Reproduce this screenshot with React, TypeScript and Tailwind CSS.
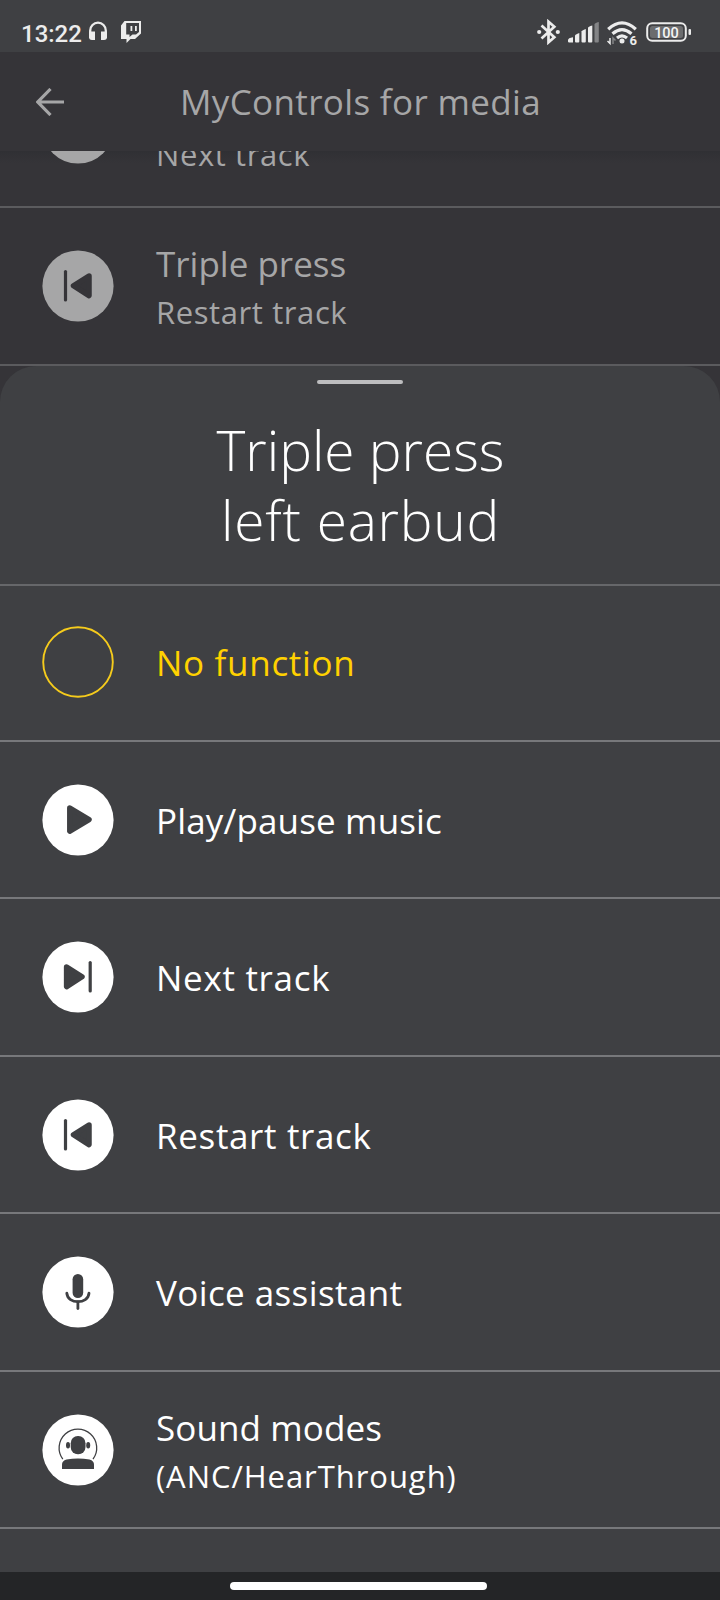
import type { ReactNode } from "react";

const ink = "#3f4043";

function Disc({ children, tone = "#fff", glyph = ink }: { children?: ReactNode; tone?: string; glyph?: string }) {
  return (
    <svg className="size-18 shrink-0" viewBox="0 0 72 72" fill={glyph} stroke={glyph} strokeWidth="0">
      <circle cx="36" cy="36" r="35.6" fill={tone} />
      {children}
    </svg>
  );
}

const PlayGlyph = () => <path d="M27.8 24 L47 35.600 L27.8 47.200 Z" strokeWidth="5.5" strokeLinejoin="round" />;
const NextGlyph = () => (
  <>
    <path d="M24.600 26 L40 35.800 L24.600 45.600 Z" strokeWidth="5.5" strokeLinejoin="round" />
    <path d="M48.2 21.600V50" strokeWidth="3.2" strokeLinecap="round" />
  </>
);
const PrevGlyph = () => (
  <>
    <path d="M47 26 L31.500 35.800 L47 45.600 Z" strokeWidth="5.5" strokeLinejoin="round" />
    <path d="M23.5 21.600V50" strokeWidth="3.2" strokeLinecap="round" />
  </>
);
const MicGlyph = () => (
  <>
    <rect x="30.6" y="18" width="10.6" height="24" rx="5.3" />
    <path d="M24.8 37.2C25.500 48.500 46.300 48.500 47 37.2" fill="none" strokeWidth="2.8" strokeLinecap="round" />
    <path d="M35.9 46V52.500" strokeWidth="2.800" strokeLinecap="round" />
  </>
);
const ModesGlyph = () => (
  <>
    <path d="M20.8 45.2A18.8 18.8 0 1 1 51 45.2" fill="none" strokeWidth="1.3" />
    <rect x="28.7" y="22" width="14.8" height="18.3" rx="7.2" />
    <ellipse cx="26" cy="31.2" rx="2" ry="3.2" />
    <ellipse cx="46.2" cy="31.2" rx="2" ry="3.2" />
    <path d="M20 55V50.5Q20 47 24.5 45.6Q36 43.2 47.500 45.6Q52 47 52 50.500V55Z" />
  </>
);

function Row({ icon, children, note, className }: { icon: ReactNode; children?: ReactNode; note?: ReactNode; className: string }) {
  return (
    <div className={`flex shrink-0 items-end gap-[42px] border-b-2 pl-[42px] ${className}`}>
      {icon}
      <div className="flex h-18 flex-col justify-center gap-[3px] pt-[1px] text-[35px] leading-[48px] whitespace-nowrap">
        <span className="flex h-12 shrink-0">{children}</span>
        {note}
      </div>
    </div>
  );
}

function StatusBar() {
  return (
    <div className="flex h-13 shrink-0 items-start bg-[#3f4043] pt-5 pl-[21px] text-[#ececec]">
      <span className="w-[61px] font-[Roboto] text-[24px] leading-[28px] font-medium whitespace-nowrap">13:22</span>
      <svg className="mt-[1px] ml-[7px] h-5 w-[18px]" viewBox="0 0 18 20" fill="currentColor">
        <path d="M1.200 17V9.500a7.800 7.800 0 0 1 15.600 0V17" fill="none" stroke="currentColor" strokeWidth="2.300" />
        <path d="M0 10.500h6v8.500H3a3 3 0 0 1-3-3zM12 10.500h6V16a3 3 0 0 1-3 3h-3z" />
      </svg>
      <svg className="mt-[1px] ml-[14px] h-[22px] w-5" viewBox="0 0 20 22" fill="currentColor">
        <path fillRule="evenodd" d="M3.500 0H20V12.500L14 18H9.500L5.500 22V18H0V4.500ZM5.200 2V13.500H8.500V16L11.500 13.500H15L18 11V2ZM9.500 5V10H11.300V5ZM14 5V10H15.800V5Z" />
      </svg>
      <svg className="-mt-[1px] ml-auto h-[26px] w-[23px]" viewBox="0 0 23 26" fill="none" stroke="currentColor" strokeWidth="2.7">
        <path d="M4.500 6.500L17.300 18.200L11.500 23.300V2.700L17.300 7.800L4.500 19.500" />
        <circle cx="2.200" cy="13" r="2.100" fill="currentColor" stroke="none" />
        <circle cx="20.800" cy="13" r="2.100" fill="currentColor" stroke="none" />
      </svg>
      <svg className="mt-[2px] ml-2 h-[21px] w-[32px]" viewBox="0 0 32 21" fill="currentColor">
        <path d="M0 18Q0 16 5 15.200V20.500H1.200Q0 20.500 0 19.500Z" />
        <path d="M7 13.500Q7 12.500 11.300 11V19.500Q11.300 20.500 10.300 20.500H8Q7 20.500 7 19.500Z" />
        <path d="M13.500 9.500Q13.500 8.500 17.800 7V19.500Q17.800 20.500 16.800 20.500H14.500Q13.500 20.500 13.500 19.500Z" />
        <path d="M20 6Q20 4.500 24.300 3.500V19.500Q24.300 20.500 23.300 20.500H21Q20 20.500 20 19.500Z" />
        <path d="M26.500 2.500Q26.500 1 30.800 0V19.500Q30.800 20.500 29.800 20.500H27.500Q26.500 20.500 26.500 19.500Z" opacity="0.4" />
      </svg>
      <svg className="mt-[1px] ml-[7px] h-[25px] w-[31px]" viewBox="0 0 31 25" fill="none" stroke="currentColor" strokeWidth="3.200">
        <path d="M1.200 8.200Q15 -4.500 28.800 8.200M5.500 12.700Q15 4.500 24.500 12.700M10 17Q15 12.800 20 17" />
        <circle cx="15" cy="20" r="2.500" fill="currentColor" stroke="none" />
        <path d="M3 17V22.500L0.500 20" strokeWidth="1.500" />
        <path d="M6 23V17L8.500 19.500" strokeWidth="1.500" opacity="0.4" />
        <text x="22.500" y="23.500" className="fill-[#ececec] font-[Roboto] text-[13px] font-bold" stroke="none">6</text>
      </svg>
      <svg className="mt-[2px] mr-7 ml-2 h-5 w-[46px]" viewBox="0 0 46 20">
        <rect x="1.200" y="1.200" width="38.600" height="17.600" rx="5" fill="none" stroke="currentColor" strokeWidth="2" />
        <rect x="4" y="4" width="33" height="12" rx="2.500" fill="#6b6c6e" />
        <rect x="42.500" y="7" width="2.500" height="6" rx="1" fill="currentColor" />
        <text x="20.500" y="15.500" textAnchor="middle" className="fill-[#f4f4f4] font-[Roboto] text-[14.500px] font-medium">100</text>
      </svg>
    </div>
  );
}

export default function App() {
  return (
    <div className="flex h-[1600px] w-[720px] flex-col overflow-hidden bg-[#353438] font-['Open_Sans',sans-serif] text-white">
      <StatusBar />
      <header className="flex h-[99px] shrink-0 items-center pl-9 text-[#a6a6a7]">
        <svg className="size-7 shrink-0" viewBox="0 0 28 28" fill="none" stroke="currentColor" strokeWidth="3.200">
          <path d="M28 14H2M14.500 1L1.800 14L14.500 27" />
        </svg>
        <h1 className="ml-[116px] text-[35px] leading-[48px] tracking-[0.35px]">MyControls for media</h1>
      </header>
      <div className="flex h-[215px] shrink-0 flex-col justify-end overflow-hidden bg-[linear-gradient(#303034,#353438_12px)] text-[#a6a6a7]">
        <Row
          className="h-[158px] border-[#5b5b5e] pb-[42px]"
          icon={<Disc tone="#a6a6a7" glyph="#353438"><NextGlyph /></Disc>}
          note={<span className="text-[31px] leading-[42px] tracking-[0.6px]">Next track</span>}
        />
        <Row
          className="h-[158px] border-[#5b5b5e] pb-[42px]"
          icon={<Disc tone="#a6a6a7" glyph="#353438"><PrevGlyph /></Disc>}
          note={<span className="text-[31px] leading-[42px] tracking-[0.6px]">Restart track</span>}
        >
          Triple press
        </Row>
      </div>
      <div className="flex min-h-0 flex-1 flex-col overflow-hidden rounded-t-[36px] bg-[#3f4043]">
        <div className="mx-auto mt-3.5 h-1 w-[86px] shrink-0 rounded-full bg-[#bdbdbf]" />
        <div className="flex h-[202px] shrink-0 flex-col items-center border-b-2 border-[#66676a] pt-[31px] pl-[1px] text-[55px] leading-[70px] font-light">
          <span>Triple press</span>
          <span className="tracking-[0.75px]">left earbud</span>
        </div>
        <Row className="h-[156px] border-[#77787b] pb-[42px] text-[#ffd100]" icon={<Disc tone={ink}><circle cx="36" cy="36" r="34.800" fill="none" stroke="#f5cb1c" strokeWidth="1.900" /></Disc>}>
          <span className="tracking-[0.7px]">No function</span>
        </Row>
        <Row className="h-[157px] border-[#77787b] pb-[41px]" icon={<Disc><PlayGlyph /></Disc>}>
          <span className="tracking-[0.15px]">Play/pause music</span>
        </Row>
        <Row className="h-[158px] border-[#77787b] pb-[42px]" icon={<Disc><NextGlyph /></Disc>}>
          <span className="tracking-[0.7px]">Next track</span>
        </Row>
        <Row className="h-[157px] border-[#77787b] pb-[41px]" icon={<Disc><PrevGlyph /></Disc>}>
          <span className="tracking-[0.65px]">Restart track</span>
        </Row>
        <Row className="h-[158px] border-[#77787b] pb-[42px]" icon={<Disc><MicGlyph /></Disc>}>
          <span className="tracking-[0.4px]">Voice assistant</span>
        </Row>
        <Row
          className="h-[157px] border-[#77787b] pb-[41px]"
          icon={<Disc><ModesGlyph /></Disc>}
          note={<span className="text-[31px] leading-[42px] tracking-[0.95px]">(ANC/HearThrough)</span>}
        >
          <span className="tracking-[0.1px]">Sound modes</span>
        </Row>
      </div>
      <div className="flex h-7 shrink-0 justify-center bg-[#242527] pt-2.5 pr-1">
        <div className="h-2 w-[257px] rounded-full bg-white" />
      </div>
    </div>
  );
}
